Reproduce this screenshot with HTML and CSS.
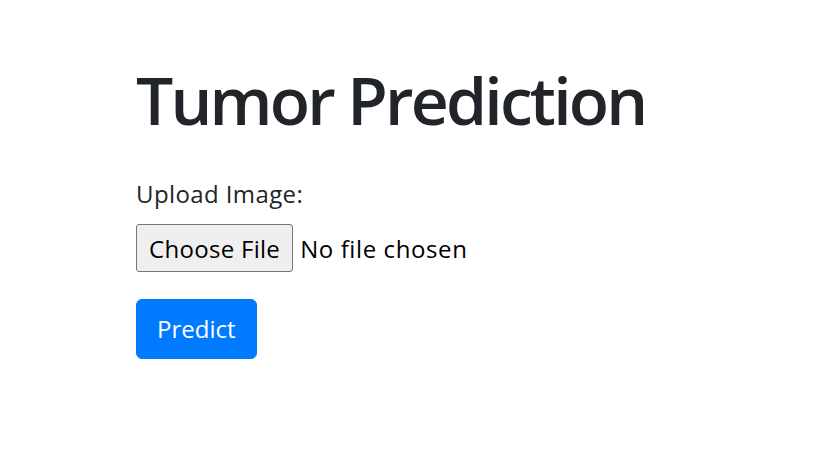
FILE: index.html
```html
<!DOCTYPE html>
<html>
<head>
<meta charset="utf-8">
<link rel="stylesheet" href="styles.css">
</head>
<body>
<div class="container">
  <h1 class="title">Tumor Prediction</h1>
  <form class="form">
    <div class="group">
      <label class="label" for="file">Upload Image:</label>
      <input class="file" id="file" type="file">
    </div>
    <button class="btn" type="button">Predict</button>
  </form>
</div>
</body>
</html>
```
FILE: styles.css
```css
html, body {
  margin: 0;
  padding: 0;
  background: #fff;
}
body {
  font-family: "Open Sans", "Noto Sans", sans-serif;
  color: #212529;
}
.container {
  padding: 60px 0 0 136px;
}
.title {
  margin: 0 0 37px;
  font-size: 66px;
  font-weight: 600;
  line-height: 1.2;
  letter-spacing: -2.8px;
  color: #212529;
}
.form {
  display: flex;
  flex-direction: column;
  align-items: flex-start;
}
.group {
  display: flex;
  flex-direction: column;
  align-items: flex-start;
  gap: 12px;
  margin-bottom: 27px;
}
.label {
  font-size: 24px;
  line-height: 1.5;
  letter-spacing: 0.4px;
}
.file {
  font-family: "Open Sans", sans-serif;
  font-size: 24px;
  letter-spacing: 0.6px;
  color: #000;
}
.file::file-selector-button {
  font-family: inherit;
  font-size: 24px;
  letter-spacing: 0.3px;
  color: #000;
  background: #efefef;
  border: 1px solid #767676;
  border-radius: 3px;
  padding: 2px 12px;
  height: 48px;
  margin-right: 7px;
}
.btn {
  font-family: inherit;
  font-size: 24px;
  line-height: 1.5;
  color: #fff;
  background: #007bff;
  border: 1px solid #007bff;
  border-radius: 6px;
  padding: 11px 20px;
  height: 60px;
}
```
